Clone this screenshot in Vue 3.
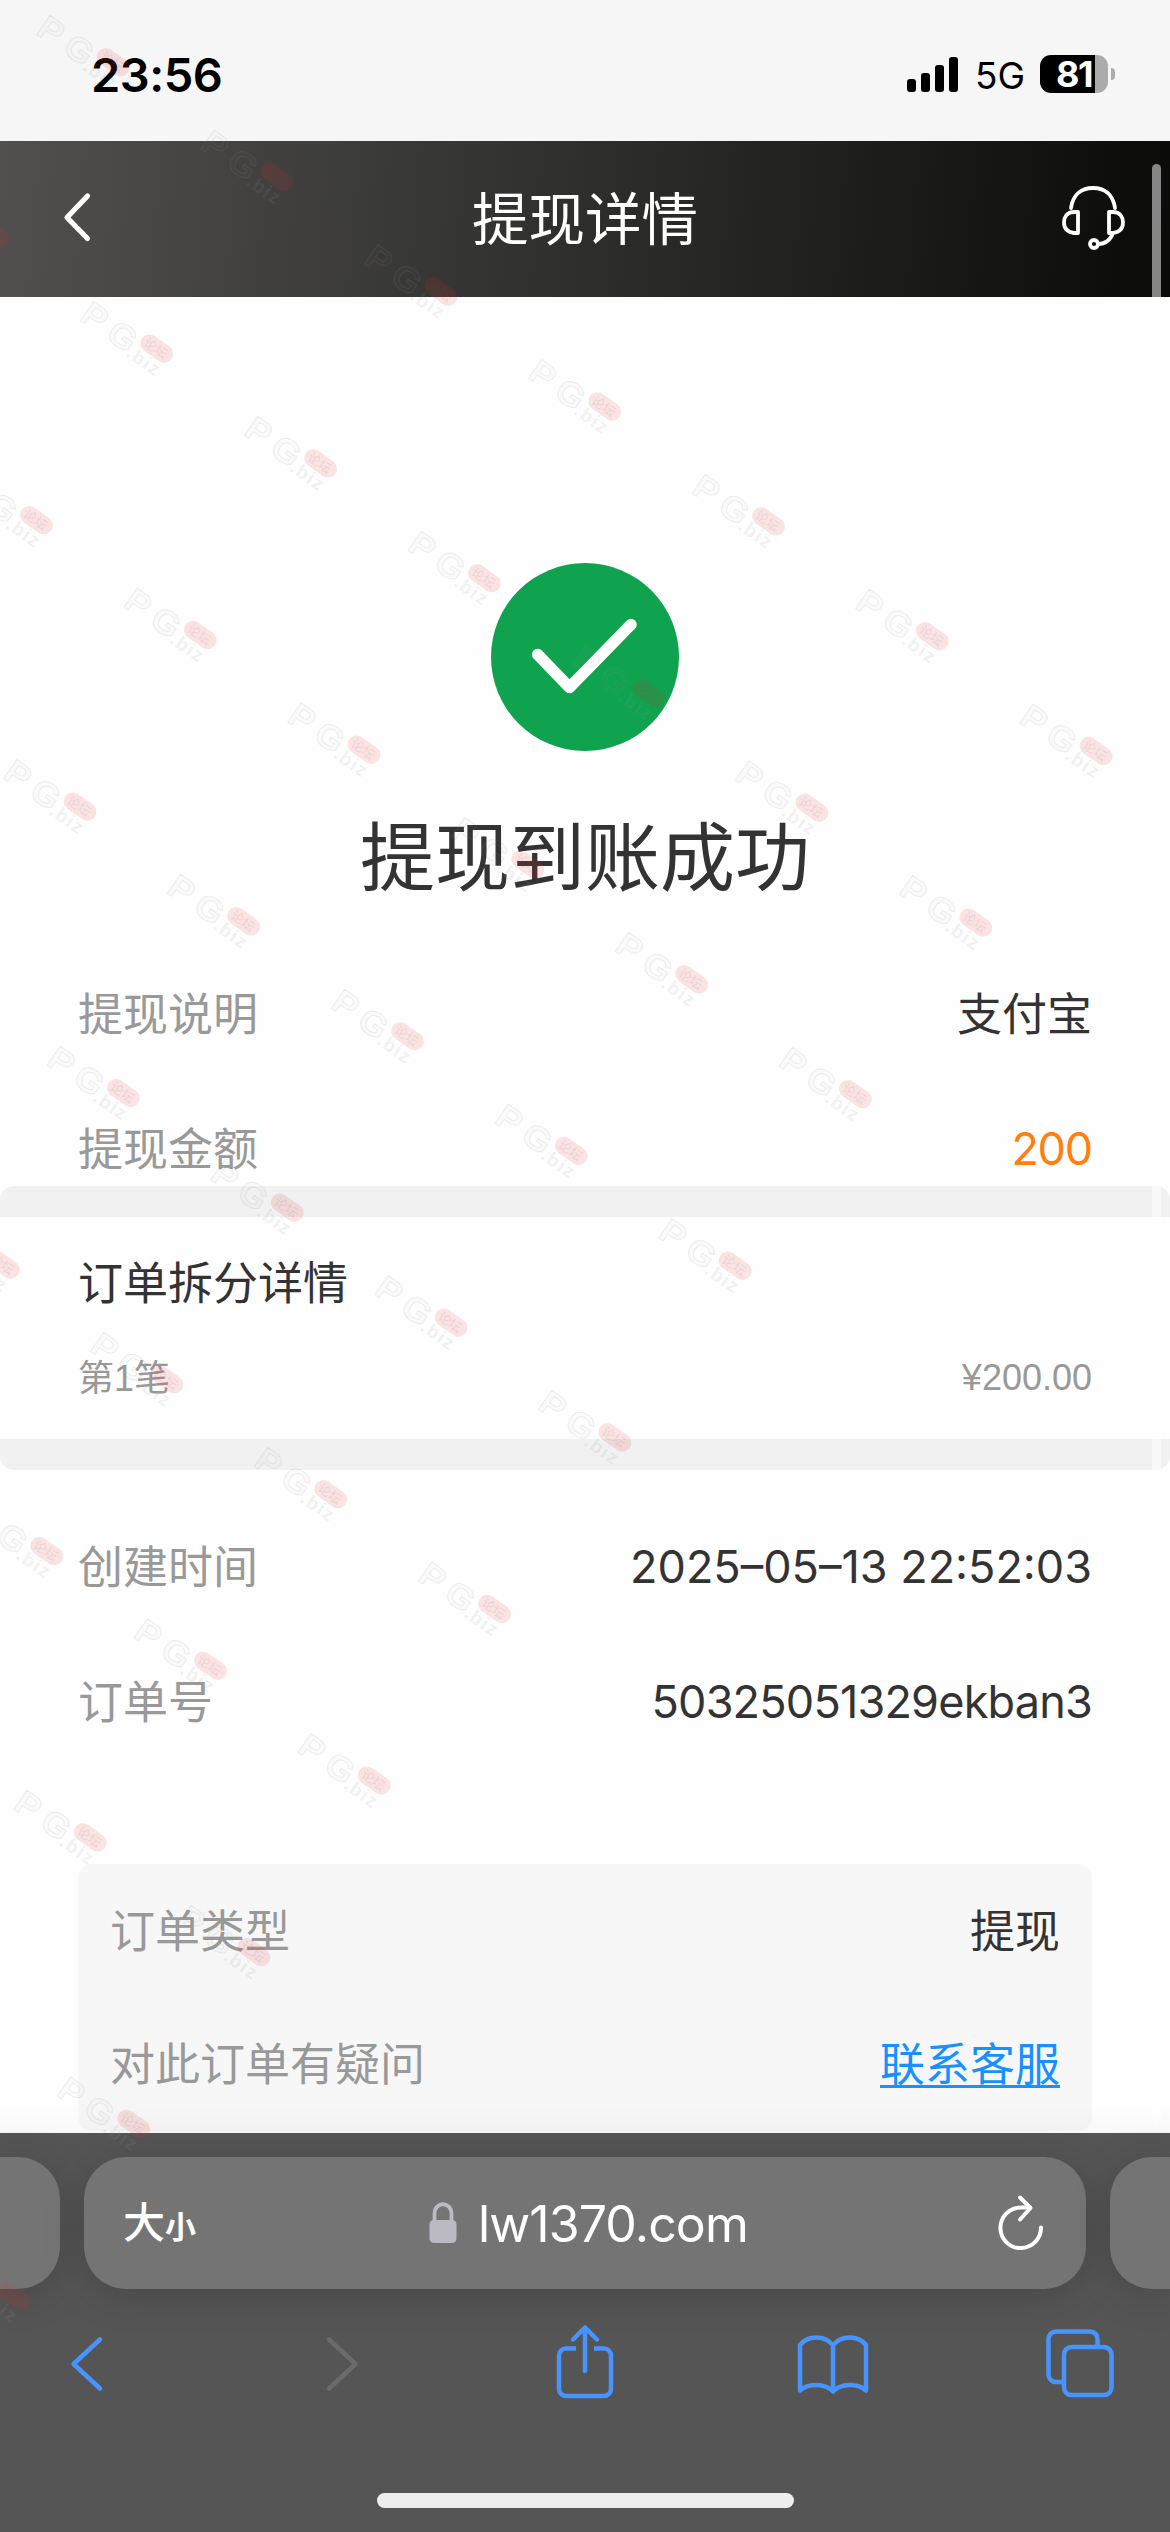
<script setup>
const summary = [
  { label: '提现说明', value: '支付宝', kind: '' },
  { label: '提现金额', value: '200', kind: 'amount' },
]
const meta = [
  { label: '创建时间', value: '2025–05–13 22:52:03', kind: 'time' },
  { label: '订单号', value: '50325051329ekban3', kind: 'serial' },
]

// Diagonal lattice of forum marks
const marks = []
for (let row = 0; row <= 9; row++) {
  for (let col = -4; col + row <= 6; col++) {
    const x = 50 + col * 163.8 + row * 43.5
    const y = 13 + col * 114.8 + row * 286.4
    if (x > -88 && x < 1190) marks.push({ x, y })
  }
}
</script>

<template>
  <div class="phone">
    <div class="status">
      <span class="clock">23:56</span>
      <svg class="signal" width="52" height="36" viewBox="0 0 52 36">
        <rect x="0" y="22" width="9" height="13" rx="3" />
        <rect x="14" y="16" width="9" height="19" rx="3" />
        <rect x="28" y="8" width="9" height="27" rx="3" />
        <rect x="42" y="0" width="9" height="35" rx="3" />
      </svg>
      <span class="network">5G</span>
      <div class="battery"><span>81</span></div>
      <i class="nub"></i>
    </div>

    <header class="header">
      <svg width="34" height="54" viewBox="0 0 34 54" fill="none" stroke="#fff" stroke-width="5.2" stroke-linecap="round" stroke-linejoin="round">
        <path d="M27.500 6 7 27.500 27.500 48.500" />
      </svg>
      <h1>提现详情</h1>
      <svg width="66" height="66" viewBox="0 0 66 66" fill="none" stroke="#fff" stroke-width="3.8" stroke-linecap="round" stroke-linejoin="round">
        <path d="M12 24C14 10 23 4 34 4s20 6 22 20" />
        <path d="M19 28v21h-4C8 48 5 44 5 38.500s3-10.500 10-10.500z" />
        <path d="M50 28v21h4c7-1 10-5 10-10.500s-3-10.500-10-10.500z" />
        <circle cx="35" cy="60" r="4" />
        <path d="M39 60C45 60 50 57 53 51.500" />
      </svg>
    </header>

    <main class="page">
      <section class="result">
        <svg width="188" height="188" viewBox="0 0 188 188">
          <circle cx="94" cy="94" r="94" fill="#0fa34f" />
          <path d="M46.700 91.500 78.500 124.500 140 61.500" fill="none" stroke="#fff" stroke-width="11.500" stroke-linecap="round" stroke-linejoin="round" />
        </svg>
        <h2>提现到账成功</h2>
      </section>

      <section class="rows">
        <div v-for="r in summary" :key="r.label" class="row">
          <span class="label">{{ r.label }}</span>
          <span class="value" :class="r.kind">{{ r.value }}</span>
        </div>
      </section>

      <section class="split">
        <div class="row split-title"><span class="label dark">订单拆分详情</span></div>
        <div class="row split-item">
          <span>第<span class="latin">1</span>笔</span>
          <span class="latin price">¥200.00</span>
        </div>
      </section>

      <section class="rows meta">
        <div v-for="r in meta" :key="r.label" class="row">
          <span class="label">{{ r.label }}</span>
          <span class="value" :class="r.kind">{{ r.value }}</span>
        </div>
      </section>

      <section class="card">
        <div class="row">
          <span class="label">订单类型</span>
          <span class="value">提现</span>
        </div>
        <div class="row">
          <span class="label">对此订单有疑问</span>
          <a class="value link">联系客服</a>
        </div>
      </section>
    </main>

    <footer class="browser">
      <div class="tabs">
        <div class="tab side"></div>
        <div class="tab address">
          <span class="size"><b>大</b><small>小</small></span>
          <svg class="lock" width="28" height="42" viewBox="0 0 28 42">
            <rect x="0.500" y="18" width="27" height="23" rx="4.500" fill="#bbbac2" />
            <path d="M5.500 20V12C5.500 -1 22.500 -1 22.500 12v8" fill="none" stroke="#bbbac2" stroke-width="3.800" />
          </svg>
          <span class="domain">lw1370.com</span>
          <svg class="reload" width="50" height="58" viewBox="0 0 50 58" fill="none" stroke="#fff" stroke-width="4" stroke-linecap="round" stroke-linejoin="round">
            <path d="M45 33.500A20.300 20.300 0 1 1 24.500 13.500H34" />
            <path d="M24 3.500 34.500 14 24 25.500" />
          </svg>
        </div>
        <div class="tab side"></div>
      </div>
      <nav class="tools">
        <svg viewBox="0 0 80 80"><path d="M54 15.500 27.500 40 54 64.500" /></svg>
        <svg viewBox="0 0 80 80" class="off"><path d="M34 15.500 60.500 40 34 64.500" /></svg>
        <svg viewBox="0 0 80 80">
          <path d="M33 24.500H23a7 7 0 0 0-7 7V65a7 7 0 0 0 7 7H61a7 7 0 0 0 7-7V31.500a7 7 0 0 0-7-7H51" stroke-linecap="butt" />
          <path d="M42 47V4M30 15.500 42 3.500 54 15.500" />
        </svg>
        <svg viewBox="0 0 80 80">
          <path d="M41 67V21.500C33 11 16 11 8 21V66.500C16 59 33 59 41 67.500 49 59 66 59 74 66.500V21C66 11 49 11 41 21.500" />
        </svg>
        <svg viewBox="0 0 80 80">
          <path d="M24 58H16a7.500 7.500 0 0 1-7.500-7.500V15A7.500 7.500 0 0 1 16 7.500H50A7.500 7.500 0 0 1 57.500 15V23" stroke-linecap="butt" />
          <rect x="24" y="23" width="47.500" height="48" rx="7.500" />
        </svg>
      </nav>
      <div class="home"></div>
    </footer>

    <div class="scrollbar"></div>

    <svg class="marks" width="1170" height="2532" viewBox="0 0 1170 2532">
      <g v-for="(m, i) in marks" :key="i" :transform="`translate(${m.x} ${m.y}) rotate(35)`">
        <text x="-1" y="25" class="pg" textLength="24" lengthAdjust="spacingAndGlyphs">P</text>
        <text x="31" y="25" class="pg" textLength="28" lengthAdjust="spacingAndGlyphs">G</text>
        <rect x="62" y="-5" width="36" height="18" rx="9" class="pill" />
        <text x="66" y="9" class="forum">论坛</text>
        <text x="58" y="28" class="biz">.biz</text>
      </g>
    </svg>
  </div>
</template>

<style>
html,
body {
  margin: 0;
}
</style>

<style scoped>
.phone {
  position: relative;
  width: 1170px;
  height: 2532px;
  overflow: hidden;
  display: flex;
  flex-direction: column;
  background: #fefefe;
  color: #333;
  font-family: 'Noto Sans CJK SC', sans-serif;
}

.status {
  height: 141px;
  box-sizing: border-box;
  padding: 54px 55px 0 91px;
  display: flex;
  align-items: flex-start;
  background: #f6f6f6;
  color: #000;
  font-family: Inter, sans-serif;
}
.clock {
  font-size: 47px;
  line-height: 41px;
  font-weight: 600;
  letter-spacing: -0.5px;
}
.signal {
  margin: 3px 16px 0 auto;
}
.network {
  width: 65px;
  font-size: 37px;
  line-height: 43px;
}
.battery {
  width: 68px;
  height: 38px;
  margin-top: 1px;
  border-radius: 11px;
  background: linear-gradient(90deg, #000 55px, #ababab 55px);
  color: #fff;
  text-align: center;
  font-size: 36px;
  line-height: 38px;
  font-weight: 700;
  letter-spacing: -1.5px;
}
.nub {
  width: 4px;
  height: 12px;
  margin: 14px 0 0 3px;
  border-radius: 0 6px 6px 0;
  background: #ababab;
}

.header {
  height: 156px;
  box-sizing: border-box;
  padding: 0 45px 5px 60px;
  display: flex;
  align-items: center;
  justify-content: space-between;
  background: linear-gradient(95deg, #51504e 0%, #2e2e2c 50%, #0a0a09 100%);
  color: #fff;
}
.header h1 {
  margin: 0 0 4px 17px;
  font-size: 56.5px;
  line-height: 80px;
  font-weight: 400;
}

.page {
  height: 1836px;
  overflow: hidden;
  background: linear-gradient(#fefefe 1805px, #f8f8f8 1836px);
}
.result {
  height: 649px;
  box-sizing: border-box;
  padding-top: 266px;
  display: flex;
  flex-direction: column;
  align-items: center;
}
.result svg {
  flex: none;
}
.result h2 {
  margin: 48px 0 0;
  font-size: 75px;
  line-height: 108px;
  font-weight: 400;
}
.row {
  height: 135px;
  display: flex;
  align-items: center;
  justify-content: space-between;
  font-size: 45px;
  line-height: 66px;
}
.rows {
  height: 240px;
  padding: 0 78px;
}
.label,
.value {
  padding-bottom: 4px;
}
.label {
  color: #999;
}
.label.dark {
  color: #333;
}
.amount,
.time,
.serial {
  padding-bottom: 0;
  font-family: Inter, sans-serif;
}
.amount {
  letter-spacing: -1.2px;
  color: #ff7f0f;
}
.serial {
  letter-spacing: -0.8px;
}
.split {
  height: 222px;
  padding: 0 78px;
  border: solid #f1f1f1;
  border-width: 31px 0;
  border-radius: 14px;
}
.split-title {
  height: 132px;
}
.split-item {
  height: 56px;
  font-size: 36px;
  line-height: 56px;
  color: #999;
}
.latin {
  font-family: 'Liberation Sans', sans-serif;
}
.price {
  padding-top: 2px;
}
.meta {
  height: 394px;
  box-sizing: border-box;
  padding-top: 29px;
}
.card {
  height: 267px;
  margin: 0 78px;
  padding: 0 32px;
  border-radius: 14px;
  background: linear-gradient(#f7f7f7 240px, #f2f2f2 267px);
}
.card .row {
  height: 133px;
}
.link {
  color: #1890ff;
  text-decoration: underline;
  text-decoration-thickness: 3px;
  text-underline-offset: 4px;
}

.browser {
  flex: 1;
  display: flex;
  flex-direction: column;
  align-items: center;
  background: #555;
}
.tabs {
  align-self: stretch;
  padding-top: 24px;
  display: flex;
  gap: 24px;
}
.tab {
  height: 132px;
  background: #747474;
  box-shadow: 0 6px 40px rgba(0, 0, 0, 0.17);
}
.side {
  flex: 1;
}
.side:first-child {
  border-radius: 0 42px 42px 0;
}
.side:last-child {
  border-radius: 42px 0 0 42px;
}
.address {
  width: 1002px;
  box-sizing: border-box;
  padding: 0 40px 0 39px;
  border-radius: 42px;
  display: flex;
  align-items: center;
  color: #fff;
}
.size {
  width: 306px;
  padding-top: 5px;
  line-height: 60px;
}
.size b {
  font-size: 42px;
  font-weight: 500;
}
.size small {
  font-size: 31px;
  font-weight: 700;
}
.domain {
  flex: 1;
  margin-left: 21px;
  padding-top: 2px;
  font-family: Inter, sans-serif;
  font-size: 50px;
  line-height: 60px;
  letter-spacing: -0.9px;
}
.tools {
  align-self: stretch;
  padding: 35px 50px 0 46px;
  display: flex;
  justify-content: space-between;
}
.tools svg {
  width: 80px;
  height: 80px;
  fill: none;
  stroke: #4794ff;
  stroke-width: 4.5;
  stroke-linecap: round;
  stroke-linejoin: round;
}
.tools .off {
  stroke: #6b6b6b;
}
.home {
  width: 417px;
  height: 15px;
  margin-top: 89px;
  border-radius: 8px;
  background: #eee;
}

.scrollbar {
  position: absolute;
  top: 164px;
  left: 1152px;
  width: 9px;
  height: 1960px;
  border-radius: 5px;
  background: rgba(255, 255, 255, 0.5);
}
.marks {
  position: absolute;
  top: 0;
  left: 0;
}
.pg {
  font: 700 34px 'Liberation Sans', sans-serif;
  fill: rgba(150, 150, 150, 0.04);
  stroke: rgba(140, 140, 140, 0.16);
  stroke-width: 1;
}
.pill {
  fill: rgba(235, 40, 50, 0.13);
}
.forum {
  font: 500 13px 'Noto Sans CJK SC', sans-serif;
  fill: rgba(90, 90, 90, 0.1);
}
.biz {
  font: 700 19px 'Liberation Sans', sans-serif;
  fill: rgba(150, 150, 150, 0.14);
  letter-spacing: 1.5px;
}
</style>
